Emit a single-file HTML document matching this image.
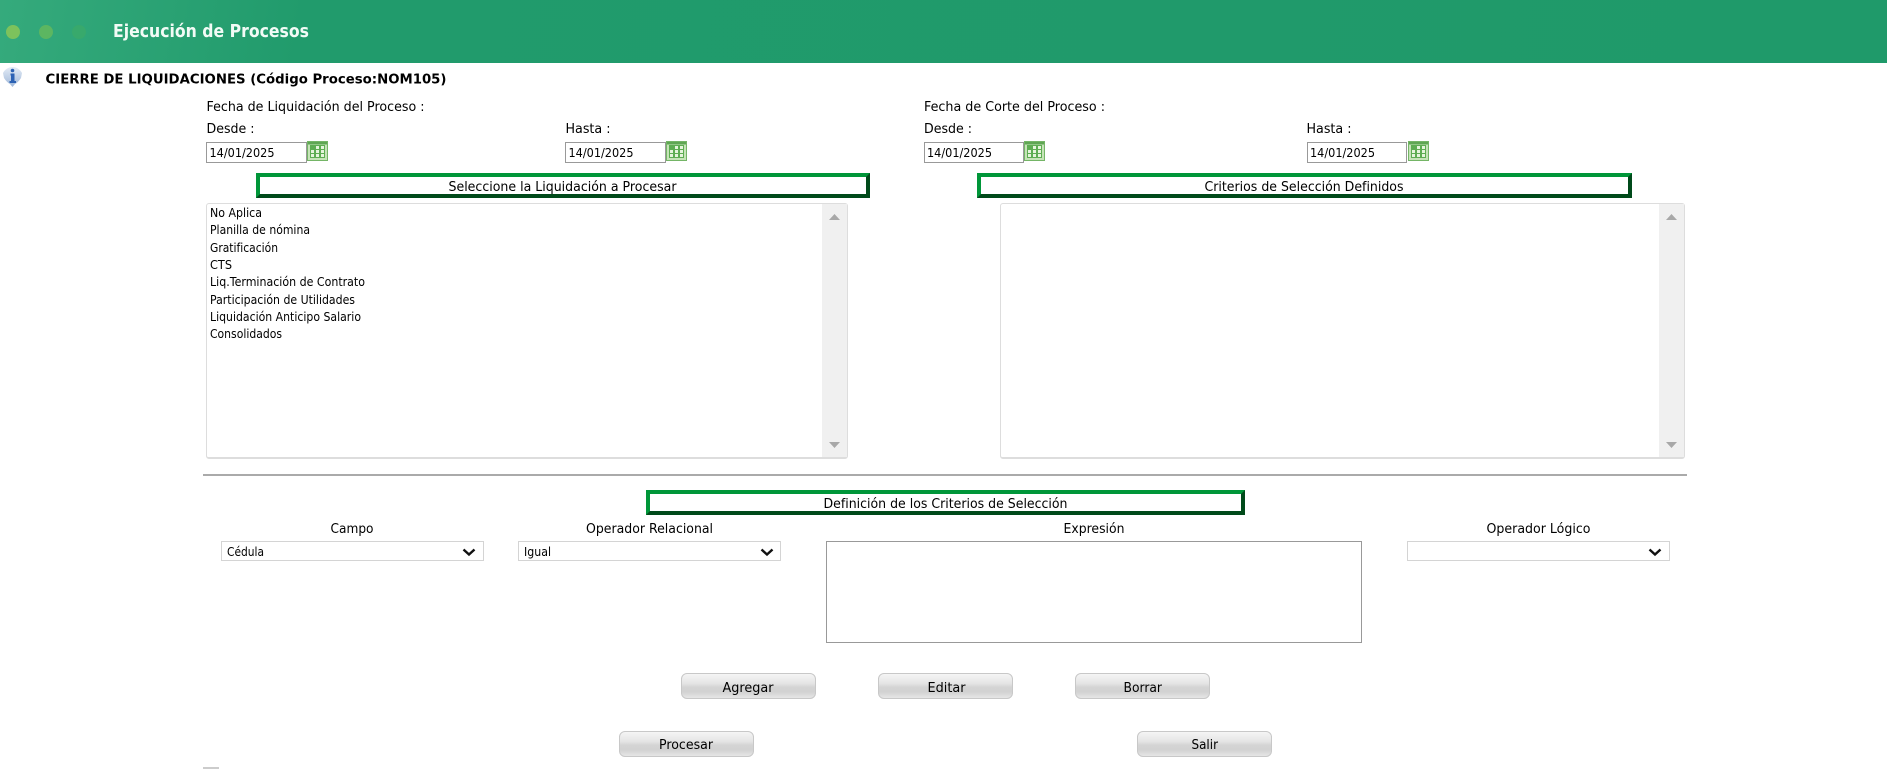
<!DOCTYPE html>
<html lang="es"><head><meta charset="utf-8"><title>Ejecución de Procesos</title>
<style>
html,body{margin:0;padding:0;width:1887px;height:777px;overflow:hidden;background:#fff}
.a{position:absolute;box-sizing:border-box}
.hdr{left:0;top:0;width:1887px;height:63px;background:linear-gradient(100deg,#35aa7c 0,#219b6c 300px,#1f9a6a 100%)}
.dot{width:14px;height:14px;border-radius:50%;top:25px}
.inp{height:21px;width:101px;top:142px;border:1px solid #999;background:#fff}
.sec{height:25px;top:173px;border:4px solid;border-color:#009639 #004a1a #004a1a #009639}
.list{top:203px;height:256px;border:1px solid #ddd;border-bottom-width:2px;border-radius:3px;background:#fff}
.sb{right:0;top:0;bottom:0;width:25px;background:#f0f0f0}
.sel{top:541px;height:20px;border:1px solid #d4d4d4;background:#fff}
.btn{border:1px solid #c8c8c8;border-radius:6px;background:linear-gradient(#f5f5f5 0,#e4e4e4 40%,#d4d4d4 55%,#d2d2d2 75%,#e6e6e6 100%)}
svg.o{position:absolute;left:0;top:0}
text{font-family:"DejaVu Sans","Liberation Sans",sans-serif;font-size:13px;fill:#000}
.s{font-size:12px}
</style></head><body>
<div class="a hdr"></div>
<div class="a dot" style="left:6px;background:#7dc25c"></div>
<div class="a dot" style="left:39px;background:#5cb661"></div>
<div class="a dot" style="left:72px;background:#38a96c"></div>

<div class="a inp" style="left:206px"></div>
<div class="a inp" style="left:565px"></div>
<div class="a inp" style="left:924px;width:100px"></div>
<div class="a inp" style="left:1307px;width:100px"></div>

<div class="a sec" style="left:256px;width:614px"></div>
<div class="a sec" style="left:977px;width:655px"></div>
<div class="a sec" style="left:646px;width:599px;top:490px"></div>

<div class="a list" style="left:206px;width:642px"><div class="a sb"></div></div>
<div class="a list" style="left:1000px;width:685px"><div class="a sb"></div></div>

<div class="a" style="left:203px;top:474px;width:1484px;height:2px;background:#aaa"></div>

<div class="a sel" style="left:221px;width:263px"></div>
<div class="a sel" style="left:518px;width:263px"></div>
<div class="a sel" style="left:1407px;width:263px"></div>
<div class="a" style="left:826px;top:541px;width:536px;height:102px;border:1px solid #999;background:#fff"></div>

<div class="a btn" style="left:681px;top:673px;width:135px;height:26px"></div>
<div class="a btn" style="left:878px;top:673px;width:135px;height:26px"></div>
<div class="a btn" style="left:1075px;top:673px;width:135px;height:26px"></div>
<div class="a btn" style="left:619px;top:731px;width:135px;height:26px"></div>
<div class="a btn" style="left:1137px;top:731px;width:135px;height:26px"></div>
<div class="a" style="left:203px;top:767px;width:16px;height:2px;background:#ccc"></div>

<svg class="o" width="1887" height="777" viewBox="0 0 1887 777" xmlns="http://www.w3.org/2000/svg">
<defs>
<linearGradient id="ig" x1="0" y1="0" x2="0" y2="1"><stop offset="0" stop-color="#e4ecf6"/><stop offset="1" stop-color="#9db6d8"/></linearGradient>
<g id="cal">
<rect x="0.5" y="0.5" width="20" height="19" fill="#c6e4b8" stroke="#74b566"/>
<rect x="1" y="1" width="19" height="2.5" fill="#5fa653"/>
<rect x="3" y="4" width="15" height="13" fill="#5ead52"/>
<g fill="#e6f4dc">
<rect x="9" y="5" width="3" height="3"/><rect x="14" y="5" width="3" height="3"/>
<rect x="4" y="9" width="3" height="3"/><rect x="9" y="9" width="3" height="3"/><rect x="14" y="9" width="3" height="3"/>
<rect x="4" y="13" width="3" height="3"/><rect x="9" y="13" width="3" height="3"/><rect x="14" y="13" width="3" height="3"/>
</g>
</g>
<path id="up" d="M0 6L5.5 0L11 6Z" fill="#a8a8a8"/>
<path id="dn" d="M0 0L11 0L5.5 6Z" fill="#a8a8a8"/>
<path id="chev" d="M1 1L6.5 6L12 1" fill="none" stroke="#111" stroke-width="2.4"/>
</defs>

<path d="M3 73C5 69 9 67 12.5 67C16 67 20 69 22 73L21 78C19 81 17 83 15 84L12.5 87L10 84C8 83 6 81 4 78Z" fill="url(#ig)"/>
<circle cx="12.5" cy="70.5" r="1.8" fill="#2c62b4"/>
<path d="M10.5 73.5H14.5V81H16V83H9.5V81H11V75.5H10.5Z" fill="#2c62b4"/>

<use href="#cal" x="307" y="141"/><use href="#cal" x="666" y="141"/><use href="#cal" x="1024" y="141"/><use href="#cal" x="1408" y="141"/>
<use href="#up" x="829" y="214"/><use href="#dn" x="829" y="442"/>
<use href="#up" x="1666" y="214"/><use href="#dn" x="1666" y="442"/>
<use href="#chev" x="462.5" y="548.5"/><use href="#chev" x="760.5" y="548.5"/><use href="#chev" x="1648.5" y="548.5"/>

<text x="113" y="37" textLength="196" lengthAdjust="spacingAndGlyphs" style="font-size:18px;font-weight:700;fill:#f2fbf6">Ejecución de Procesos</text>
<text x="45.5" y="83.5" textLength="401" lengthAdjust="spacingAndGlyphs" style="font-weight:700">CIERRE DE LIQUIDACIONES (Código Proceso:NOM105)</text>

<text x="206.5" y="111" textLength="218" lengthAdjust="spacingAndGlyphs">Fecha de Liquidación del Proceso :</text>
<text x="924" y="111" textLength="181" lengthAdjust="spacingAndGlyphs">Fecha de Corte del Proceso :</text>
<text x="206.5" y="133" textLength="48" lengthAdjust="spacingAndGlyphs">Desde :</text>
<text x="565.5" y="133" textLength="45" lengthAdjust="spacingAndGlyphs">Hasta :</text>
<text x="924" y="133" textLength="48" lengthAdjust="spacingAndGlyphs">Desde :</text>
<text x="1306.5" y="133" textLength="45" lengthAdjust="spacingAndGlyphs">Hasta :</text>

<text class="s" x="209.5" y="157" textLength="65" lengthAdjust="spacingAndGlyphs">14/01/2025</text>
<text class="s" x="568.5" y="157" textLength="65" lengthAdjust="spacingAndGlyphs">14/01/2025</text>
<text class="s" x="927" y="157" textLength="65" lengthAdjust="spacingAndGlyphs">14/01/2025</text>
<text class="s" x="1310" y="157" textLength="65" lengthAdjust="spacingAndGlyphs">14/01/2025</text>

<text x="448.5" y="191" textLength="228" lengthAdjust="spacingAndGlyphs">Seleccione la Liquidación a Procesar</text>
<text x="1204.5" y="191" textLength="199" lengthAdjust="spacingAndGlyphs">Criterios de Selección Definidos</text>
<text x="823.5" y="508" textLength="244" lengthAdjust="spacingAndGlyphs">Definición de los Criterios de Selección</text>

<text class="s" x="210" y="217" textLength="52" lengthAdjust="spacingAndGlyphs">No Aplica</text>
<text class="s" x="210" y="234" textLength="100" lengthAdjust="spacingAndGlyphs">Planilla de nómina</text>
<text class="s" x="210" y="252" textLength="68" lengthAdjust="spacingAndGlyphs">Gratificación</text>
<text class="s" x="210" y="269" textLength="22" lengthAdjust="spacingAndGlyphs">CTS</text>
<text class="s" x="210" y="286" textLength="155" lengthAdjust="spacingAndGlyphs">Liq.Terminación de Contrato</text>
<text class="s" x="210" y="304" textLength="145" lengthAdjust="spacingAndGlyphs">Participación de Utilidades</text>
<text class="s" x="210" y="321" textLength="151" lengthAdjust="spacingAndGlyphs">Liquidación Anticipo Salario</text>
<text class="s" x="210" y="338" textLength="72" lengthAdjust="spacingAndGlyphs">Consolidados</text>

<text x="330.5" y="533" textLength="43" lengthAdjust="spacingAndGlyphs">Campo</text>
<text x="586" y="533" textLength="127" lengthAdjust="spacingAndGlyphs">Operador Relacional</text>
<text x="1063.5" y="533" textLength="61" lengthAdjust="spacingAndGlyphs">Expresión</text>
<text x="1486.5" y="533" textLength="104" lengthAdjust="spacingAndGlyphs">Operador Lógico</text>

<text class="s" x="227" y="556" textLength="37" lengthAdjust="spacingAndGlyphs">Cédula</text>
<text class="s" x="524" y="556" textLength="27" lengthAdjust="spacingAndGlyphs">Igual</text>

<text x="722.5" y="692" textLength="51" lengthAdjust="spacingAndGlyphs">Agregar</text>
<text x="927.5" y="692" textLength="38" lengthAdjust="spacingAndGlyphs">Editar</text>
<text x="1123.5" y="692" textLength="38.5" lengthAdjust="spacingAndGlyphs">Borrar</text>
<text x="659" y="749" textLength="54" lengthAdjust="spacingAndGlyphs">Procesar</text>
<text x="1191.5" y="749" textLength="26.5" lengthAdjust="spacingAndGlyphs">Salir</text>
</svg>
</body></html>
